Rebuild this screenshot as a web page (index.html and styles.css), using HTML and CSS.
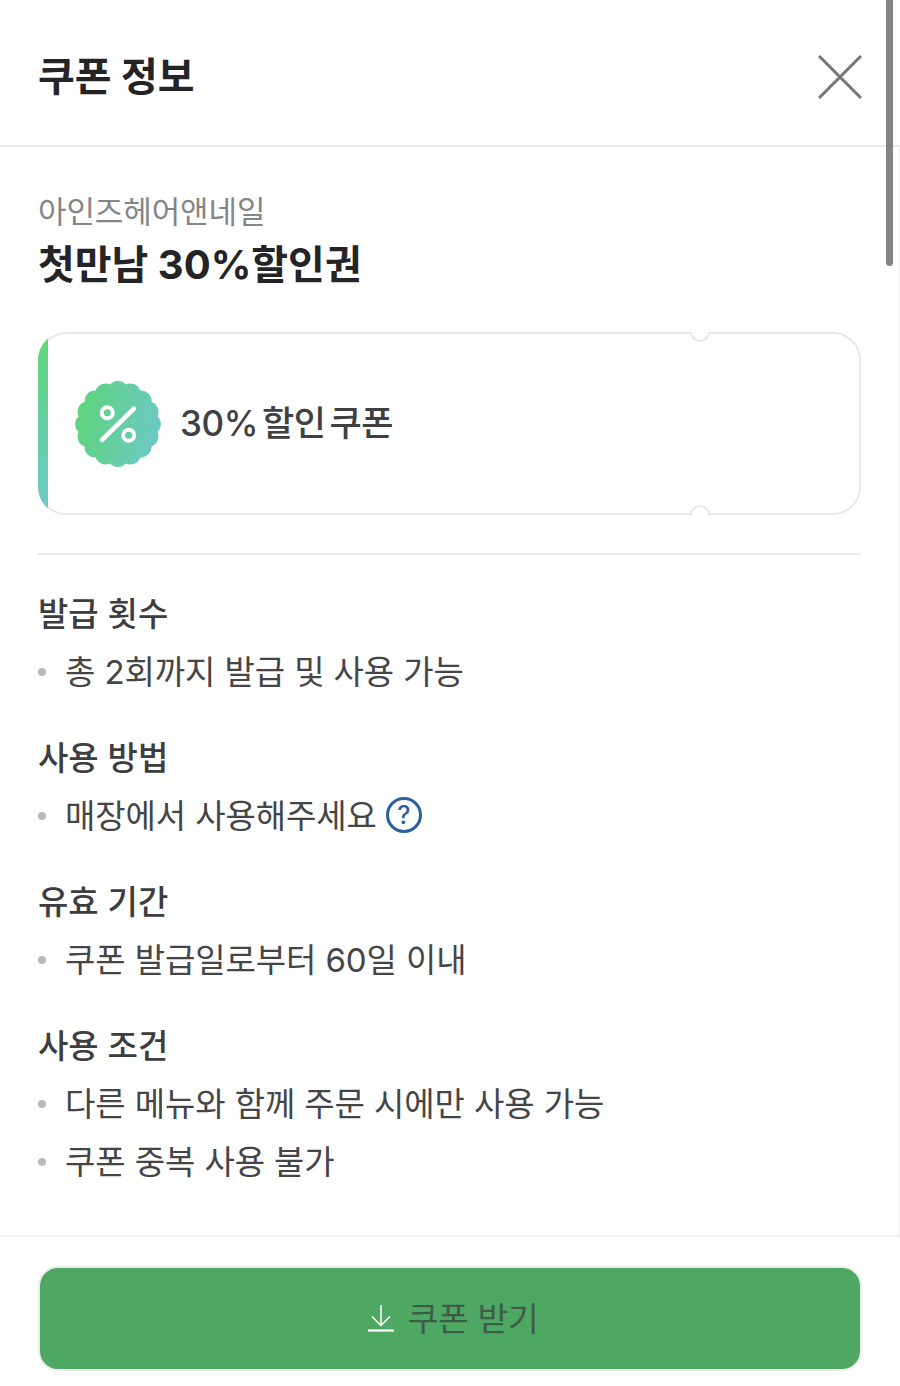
FILE: index.html
```html
<!DOCTYPE html>
<html lang="ko">
<head>
<meta charset="utf-8">
<title>쿠폰 정보</title>
<link rel="stylesheet" href="styles.css">
</head>
<body>
<div class="sheet">
  <header class="header">
    <h1 class="title">쿠폰 정보</h1>
    <svg class="close" viewBox="0 0 44 44" aria-label="닫기"><path d="M1 1L43 43M43 1L1 43"/></svg>
  </header>
  <main class="content">
    <p class="shop">아인즈헤어앤네일</p>
    <h2 class="name">첫만남 30%할인권</h2>
    <div class="ticket">
      <div class="stripe-clip"><div class="stripe"></div></div>
      <span class="notch notch-top"></span>
      <span class="notch notch-bottom"></span>
      <svg class="badge" viewBox="0 0 88 88">
        <defs>
          <linearGradient id="bg" x1="0" y1="0" x2="1" y2="0">
            <stop offset="0" stop-color="#5fd47c"/>
            <stop offset="1" stop-color="#6cc8c6"/>
          </linearGradient>
        </defs>
        <path fill="url(#bg)" d="M82 44A10 10 0 0 1 79.1 58.5A10 10 0 0 1 70.9 70.9A10 10 0 0 1 58.5 79.1A10 10 0 0 1 44 82A10 10 0 0 1 29.5 79.1A10 10 0 0 1 17.1 70.9A10 10 0 0 1 8.9 58.5A10 10 0 0 1 6 44A10 10 0 0 1 8.9 29.5A10 10 0 0 1 17.1 17.1A10 10 0 0 1 29.5 8.9A10 10 0 0 1 44 6A10 10 0 0 1 58.5 8.9A10 10 0 0 1 70.9 17.1A10 10 0 0 1 79.1 29.5A10 10 0 0 1 82 44Z" transform="rotate(11.25 44 44) translate(44 44) scale(1.035) translate(-44 -44)"/>
        <g fill="none" stroke="#fff">
          <path d="M28.5 59.5L59.5 29" stroke-width="4.6" stroke-linecap="round"/>
          <circle cx="33.5" cy="33" r="5.4" stroke-width="3.8"/>
          <circle cx="54.5" cy="55" r="5.4" stroke-width="3.8"/>
        </g>
      </svg>
      <span class="ticket-label">30% 할인 쿠폰</span>
    </div>
    <hr class="divider">
    <section class="block">
      <h3 class="block-title">발급 횟수</h3>
      <ul class="list"><li>총 2회까지 발급 및 사용 가능</li></ul>
    </section>
    <section class="block">
      <h3 class="block-title">사용 방법</h3>
      <ul class="list"><li>매장에서 사용해주세요<span class="help">?</span></li></ul>
    </section>
    <section class="block">
      <h3 class="block-title">유효 기간</h3>
      <ul class="list"><li>쿠폰 발급일로부터 60일 이내</li></ul>
    </section>
    <section class="block">
      <h3 class="block-title">사용 조건</h3>
      <ul class="list">
        <li>다른 메뉴와 함께 주문 시에만 사용 가능</li>
        <li>쿠폰 중복 사용 불가</li>
      </ul>
    </section>
  </main>
  <footer class="footer">
    <button class="cta" type="button">
      <svg class="down" viewBox="0 0 28 28"><path d="M14 1V21M5 12.5L14 21.5L23 12.5"/><path class="down-base" d="M1 26.5H27"/></svg>
      <span class="cta-text">쿠폰 받기</span>
    </button>
  </footer>
  <div class="scrollbar"></div>
</div>
</body>
</html>
```
FILE: styles.css
```css
* { box-sizing: border-box; }
html, body { margin: 0; padding: 0; background: #fff; }
body {
  width: 900px;
  height: 1386px;
  overflow: hidden;
  font-family: "Inter", "Noto Sans CJK KR", sans-serif;
  color: #3d3d3f;
}
.sheet { position: relative; width: 900px; height: 1386px; display: flex; flex-direction: column; }
.header {
  height: 147px;
  flex: none;
  display: flex;
  align-items: center;
  justify-content: space-between;
  padding: 0 38px 0 38px;
  border-bottom: 2px solid #e9e9eb;
}
.title { margin: 8px 0 0; font-size: 40px; line-height: 56px; font-weight: 700; color: #242426; }
.close { width: 44px; height: 44px; margin-top: 9px; fill: none; stroke: #777779; stroke-width: 3; }
.content { flex: 1; padding: 43px 38px 0; border-right: 1px solid #f1f1f3; }
.shop { margin: 0; font-size: 31px; line-height: 44px; color: #858587; letter-spacing: -0.1px; }
.name { margin: 3px 0 0; font-size: 40px; line-height: 56px; font-weight: 700; color: #242426; }
.ticket {
  position: relative;
  margin-top: 39px;
  height: 183px;
  border: 2px solid #e8e8ea;
  border-radius: 28px;
  display: flex;
  align-items: center;
  padding-left: 33px;
  gap: 17px;
}
.stripe-clip { position: absolute; inset: -2px; border-radius: 28px; overflow: hidden; }
.stripe { width: 10px; height: 100%; background: linear-gradient(180deg, #5fd676, #6cc8cc); }
.notch {
  position: absolute;
  left: 650px;
  width: 20px;
  height: 10px;
  background: #fff;
  border: 2px solid #e8e8ea;
}
.notch-top { top: -2px; border-top: 0; border-radius: 0 0 10px 10px; }
.notch-bottom { bottom: -2px; border-bottom: 0; border-radius: 10px 10px 0 0; }
.badge { width: 90px; height: 90px; flex: none; }
.ticket-label { font-size: 35px; line-height: 50px; font-weight: 500; color: #404042; letter-spacing: -0.4px; word-spacing: -5px; margin-top: -2px; }
.divider { margin: 38px 0 0; height: 2px; border: 0; background: #ececee; }
.block { height: 144px; }
.block:first-of-type { margin-top: 34px; }
.block-title { margin: 0; font-size: 33px; line-height: 50px; font-weight: 500; color: #3d3d3f; }
.list { margin: 2px 0 0; padding: 0; list-style: none; }
.list li { position: relative; display: flex; align-items: center; height: 58px; padding-left: 27px; font-size: 33px; color: #454547; letter-spacing: -0.1px; }
.list li::before {
  content: "";
  position: absolute;
  left: 0;
  top: 27px;
  width: 8px;
  height: 8px;
  border-radius: 50%;
  background: #bcbcbe;
}
.help {
  width: 36px;
  height: 36px;
  margin: 2px 0 0 9px;
  border: 3px solid #2a609c;
  border-radius: 50%;
  color: #2a609c;
  font-size: 25px;
  font-weight: 500;
  line-height: 30px;
  text-align: center;
  flex: none;
}
.footer {
  height: 151px;
  flex: none;
  padding: 29px 38px 0;
  border-top: 2px solid #efeff1;
}
.cta {
  width: 100%;
  height: 105px;
  display: flex;
  align-items: center;
  justify-content: center;
  gap: 13px;
  background: #4ea763;
  border: 2px solid #eceeec;
  border-radius: 20px;
  padding: 0 0 0 5px;
  font-family: inherit;
  font-size: 33.5px;
  color: #3d5c48;
  letter-spacing: -0.4px;
}
.cta-text { margin-top: -5px; }
.down { width: 28px; height: 28px; fill: none; stroke: #fff; stroke-width: 1.5; margin-top: -2px; }
.down-base { stroke-width: 2.2; }
.scrollbar {
  position: absolute;
  top: -8px;
  left: 886px;
  width: 7px;
  height: 274px;
  border-radius: 4px;
  background: rgba(90, 90, 92, 0.75);
}
```
